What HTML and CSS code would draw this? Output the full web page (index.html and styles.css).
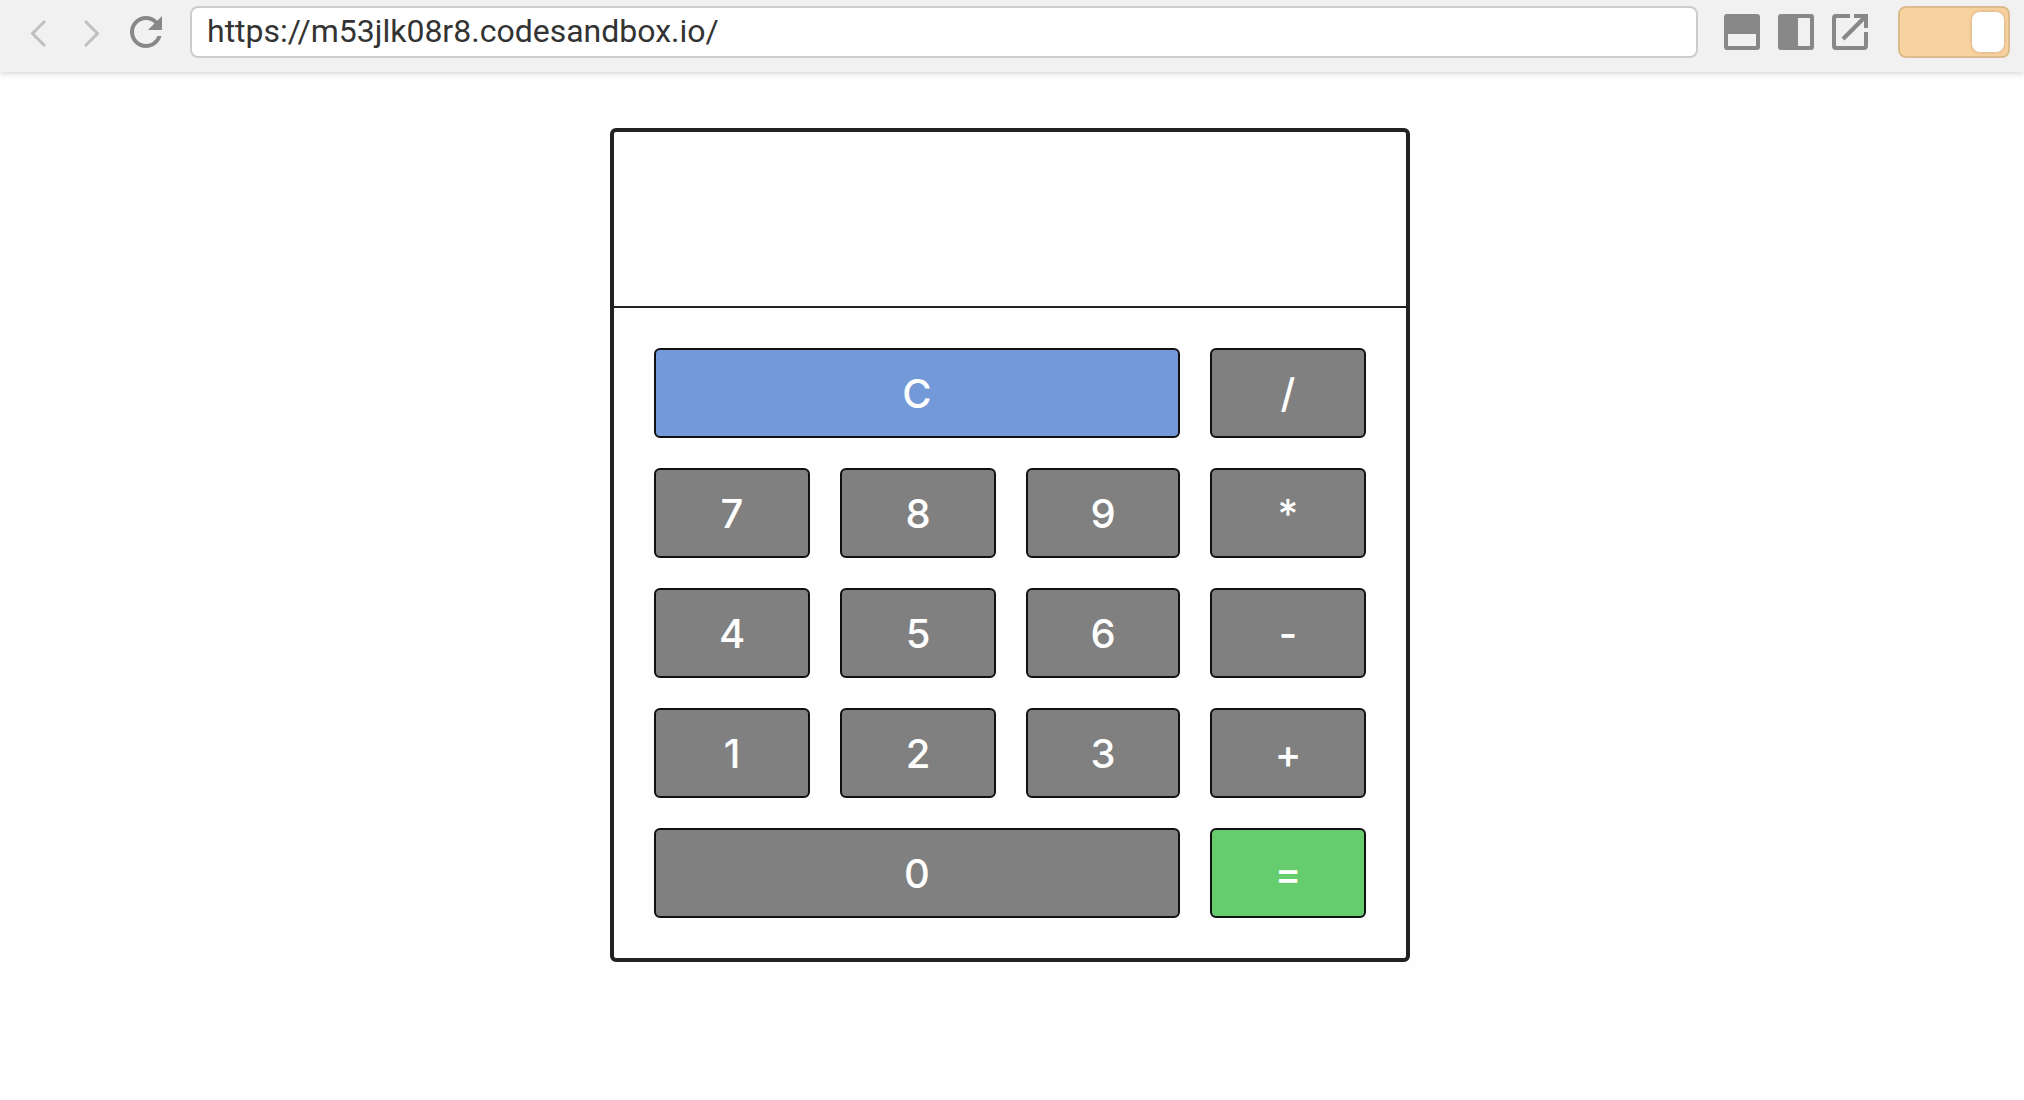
FILE: index.html
```html
<!DOCTYPE html>
<html lang="en">
<head>
  <meta charset="utf-8">
  <meta name="viewport" content="width=device-width, initial-scale=1">
  <title>Calculator</title>
  <link rel="stylesheet" href="styles.css">
</head>
<body>
  <header class="toolbar">
    <nav class="history" aria-label="History">
      <button class="icon-button faint" type="button" aria-label="Back">
        <svg width="16" height="32" viewBox="0 0 16 32" fill="none" stroke="currentColor" stroke-width="3"><path d="M15 5 2.500 17.500 15 30"/></svg>
      </button>
      <button class="icon-button faint forward" type="button" aria-label="Forward">
        <svg width="16" height="32" viewBox="0 0 16 32" fill="none" stroke="currentColor" stroke-width="3"><path d="M1 5 13.500 17.500 1 30"/></svg>
      </button>
      <button class="icon-button reload" type="button" aria-label="Reload">
        <svg width="32" height="32" viewBox="4 4 16 16" fill="currentColor"><path d="M17.65 6.35C16.2 4.9 14.21 4 12 4c-4.42 0-7.99 3.58-7.99 8s3.57 8 7.99 8c3.73 0 6.84-2.55 7.730-6h-2.080c-.82 2.330-3.040 4-5.650 4-3.310 0-6-2.690-6-6s2.690-6 6-6c1.660 0 3.140.69 4.220 1.780L13 11h7V4l-2.350 2.350z"/></svg>
      </button>
    </nav>
    <input class="address" type="text" aria-label="Address" value="https://m53jlk08r8.codesandbox.io/">
    <div class="views">
      <button class="icon-button" type="button" aria-label="Dock to bottom">
        <svg width="36" height="36" viewBox="0 0 36 36" fill="currentColor" fill-rule="evenodd"><path d="M3 0h30a3 3 0 0 1 3 3v30a3 3 0 0 1-3 3H3a3 3 0 0 1-3-3V3a3 3 0 0 1 3-3zM4 20v12h28V20z"/></svg>
      </button>
      <button class="icon-button" type="button" aria-label="Dock to right">
        <svg width="36" height="36" viewBox="0 0 36 36" fill="currentColor" fill-rule="evenodd"><path d="M3 0h30a3 3 0 0 1 3 3v30a3 3 0 0 1-3 3H3a3 3 0 0 1-3-3V3a3 3 0 0 1 3-3zM20 4v28h12V4z"/></svg>
      </button>
      <button class="icon-button" type="button" aria-label="Open in new window">
        <svg width="36" height="36" viewBox="0 0 36 36" fill="currentColor"><path d="M18 0v4H4v28h28V18h4v14a4 4 0 0 1-4 4H4a4 4 0 0 1-4-4V4a4 4 0 0 1 4-4zM22 0h14v14h-4V7L12.500 26.500 9.500 23.500 29 4h-7z"/></svg>
      </button>
    </div>
    <input class="toggle" type="checkbox" role="switch" aria-label="Preview" checked>
  </header>

  <main class="stage">
    <section class="calculator" aria-label="Calculator">
      <output class="display"></output>
      <div class="keys">
        <button class="key wide clear" type="button">C</button>
        <button class="key" type="button">/</button>
        <button class="key" type="button">7</button>
        <button class="key" type="button">8</button>
        <button class="key" type="button">9</button>
        <button class="key" type="button">*</button>
        <button class="key" type="button">4</button>
        <button class="key" type="button">5</button>
        <button class="key" type="button">6</button>
        <button class="key" type="button">-</button>
        <button class="key" type="button">1</button>
        <button class="key" type="button">2</button>
        <button class="key" type="button">3</button>
        <button class="key" type="button">+</button>
        <button class="key wide" type="button">0</button>
        <button class="key equals" type="button">=</button>
      </div>
    </section>
  </main>
</body>
</html>
```
FILE: styles.css
```css
* {
  box-sizing: border-box;
}

body {
  margin: 0;
  background: #fefefe;
  font-family: Inter, "Liberation Sans", sans-serif;
}

.toolbar {
  display: flex;
  align-items: center;
  padding: 6px 14px 14px 30px;
  background: #f1f1f1;
  box-shadow: 0 1px 6px rgba(0, 0, 0, 0.2);
}

.history,
.views {
  display: flex;
  align-items: center;
}

.icon-button {
  display: flex;
  padding: 0;
  border: 0;
  background: none;
  color: #888;
}

.faint {
  color: #c0c0c0;
}

.forward {
  margin-left: 38px;
}

.reload {
  margin-left: 30px;
}

.address {
  flex: 1;
  min-width: 0;
  height: 52px;
  margin: 0 26px 0 28px;
  padding: 0 15px 2px;
  border: 2px solid #ccc;
  border-radius: 8px;
  background: #fff;
  color: #333;
  font: 32px Roboto, "Liberation Sans", sans-serif;
}

.views {
  gap: 18px;
}

.toggle {
  display: flex;
  justify-content: flex-start;
  width: 112px;
  height: 52px;
  margin: 0 0 0 30px;
  padding: 4px;
  border: 2px solid #dcbc8c;
  border-radius: 8px;
  background: #f8d3a0;
  appearance: none;
}

.toggle:checked {
  justify-content: flex-end;
}

.toggle::before {
  content: "";
  width: 32px;
  border-radius: 8px;
  background: #fff;
  box-shadow: 0 0 4px rgba(0, 0, 0, 0.2);
}

.stage {
  padding: 56px 4px 56px 0;
}

.calculator {
  max-width: 800px;
  margin: 0 auto;
  border: 4px solid #222;
  border-radius: 6px;
}

.display {
  display: block;
  height: 176px;
  border-bottom: 2px solid #222;
}

.keys {
  display: grid;
  grid-template-columns: 156fr 156fr 154fr 156fr;
  grid-auto-rows: 90px;
  gap: 30px;
  padding: 40px;
}

.key {
  padding: 0;
  border: 2px solid #111;
  border-radius: 6px;
  background: #808080;
  color: #fff;
  font: 500 40px Inter, "Liberation Sans", sans-serif;
}

.wide {
  grid-column: span 3;
}

.clear {
  background: #7399d8;
}

.equals {
  background: #65cd6e;
}
```
